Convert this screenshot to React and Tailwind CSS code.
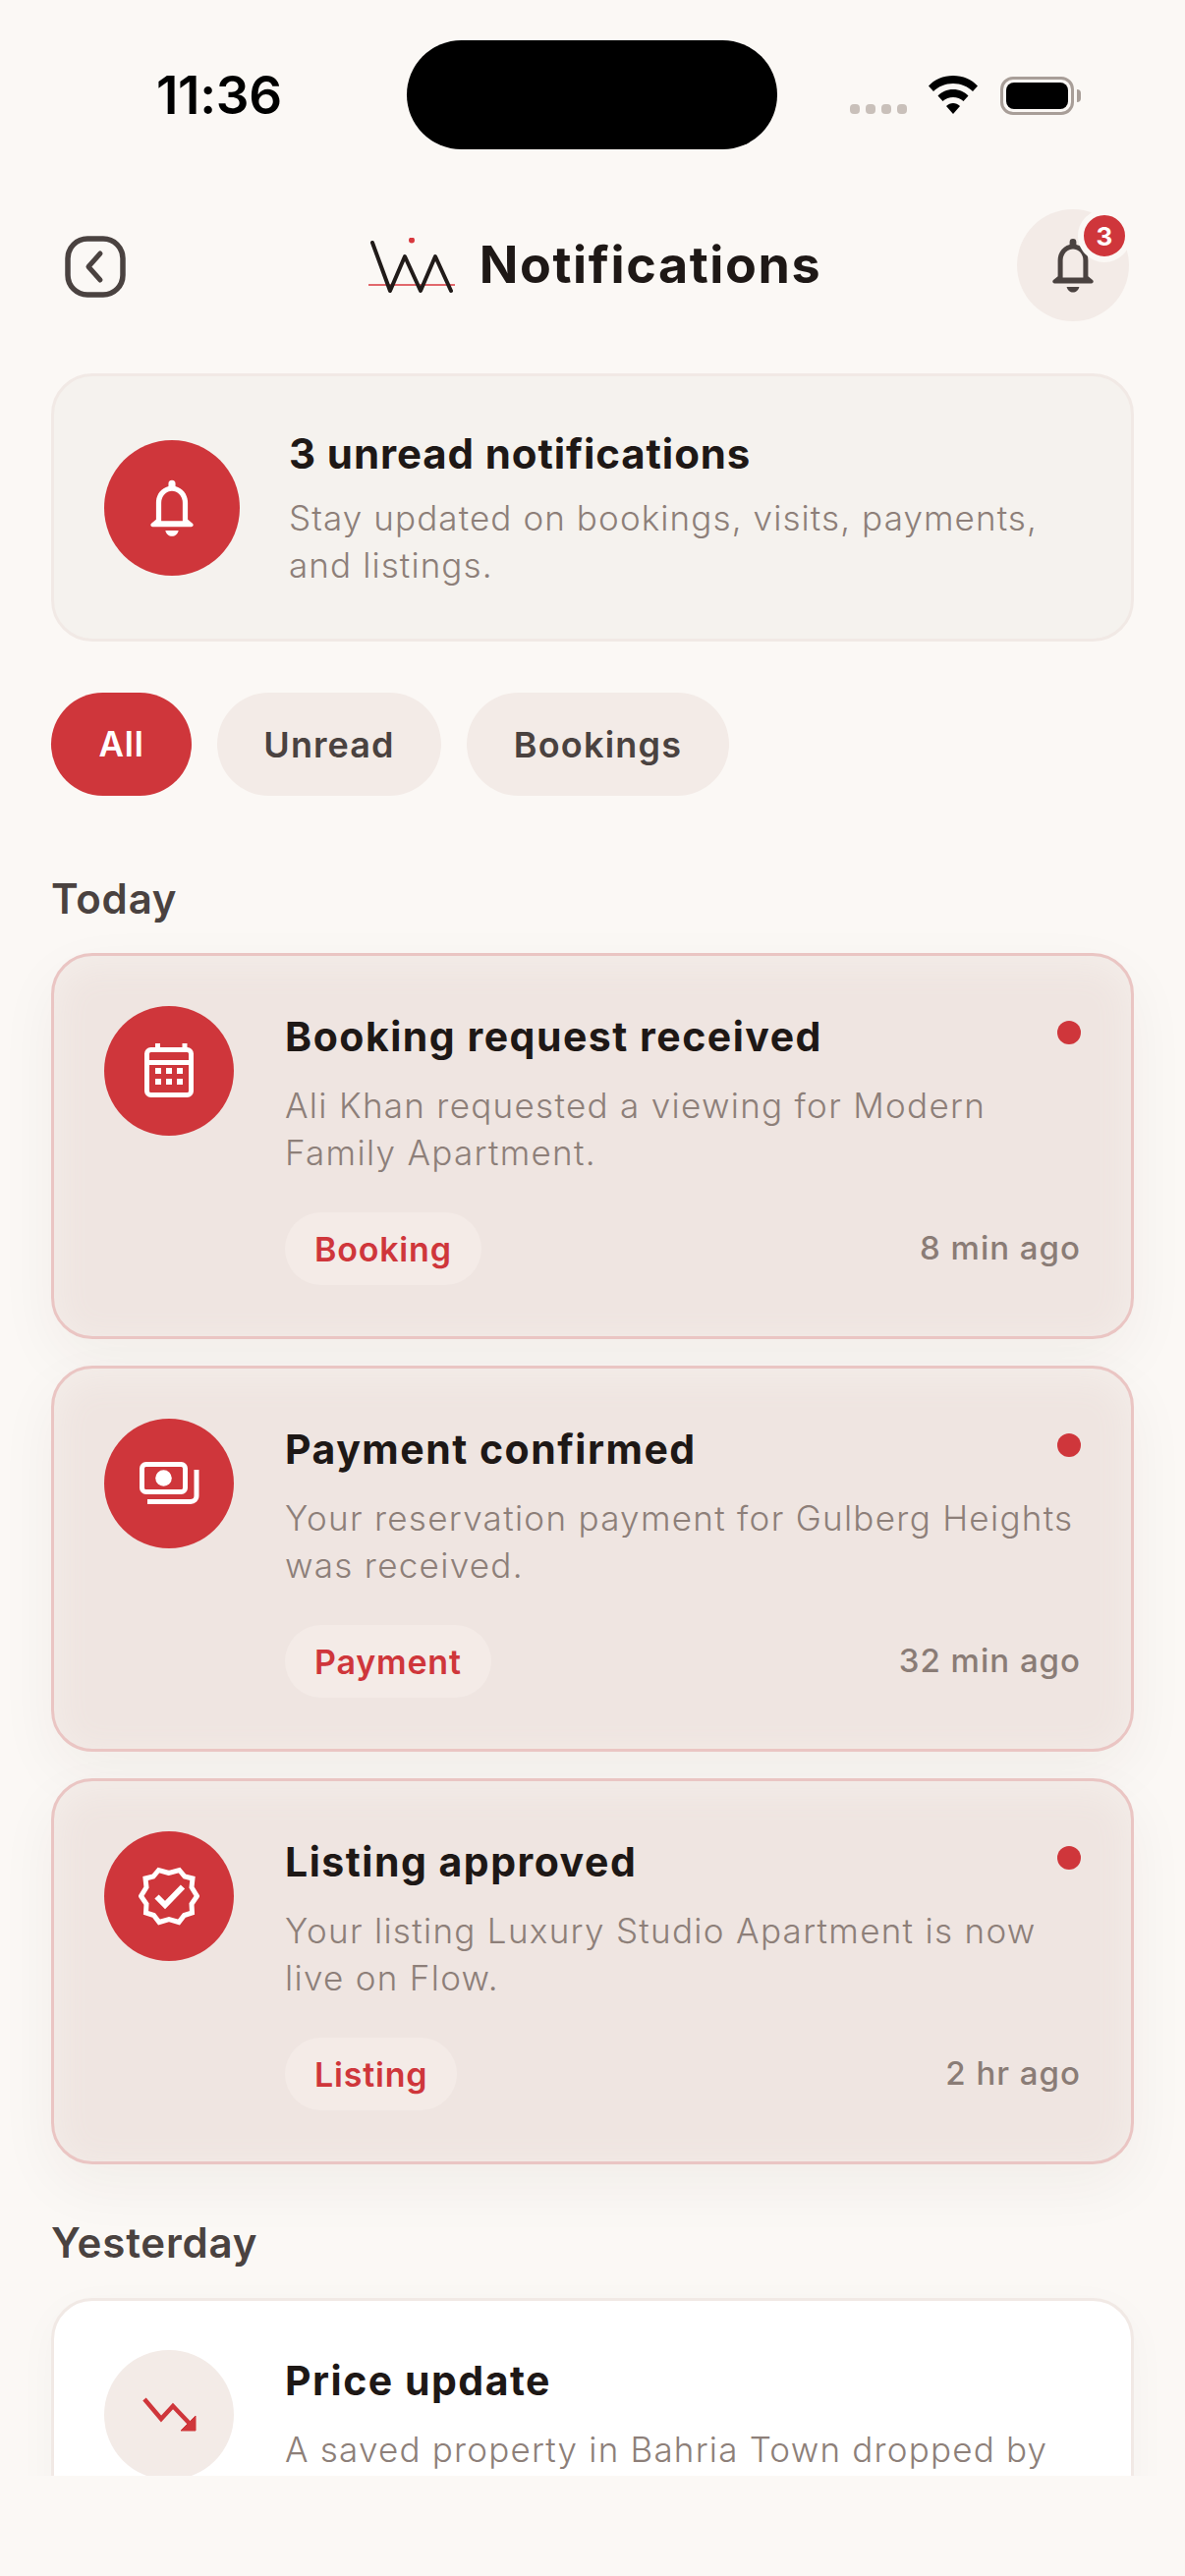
import React from "react";

const font = { fontFamily: "Inter, 'Open Sans', sans-serif" };

function CalendarIcon() {
  return (
    <svg width="60" height="66" viewBox="0 -3 60 66" fill="none">
      <rect x="7.5" y="8.5" width="45" height="46" rx="4" stroke="#fff" strokeWidth="5" />
      <path d="M5 21.5H55" stroke="#fff" strokeWidth="5" />
      <path d="M18.5 2V8M46 2V8" stroke="#fff" strokeWidth="5" />
      <g fill="#fff">
        <rect x="16" y="27" width="6" height="6" /><rect x="27" y="27" width="6" height="6" /><rect x="38" y="27" width="6" height="6" />
        <rect x="16" y="38" width="6" height="6" /><rect x="27" y="38" width="6" height="6" /><rect x="38" y="38" width="6" height="6" />
      </g>
    </svg>
  );
}
function MoneyIcon() {
  return (
    <svg width="66" height="48" viewBox="0 0 66 48" fill="none">
      <rect x="5.500" y="4.500" width="44" height="28" rx="4" stroke="#fff" strokeWidth="5" />
      <circle cx="27.500" cy="18.500" r="8.3" fill="#fff" />
      <path d="M11 42.5H55C58.5 42.5 61 40 61 36.5V10" stroke="#fff" strokeWidth="5" />
    </svg>
  );
}
function BadgeIcon() {
  return (
    <svg width="62" height="60" viewBox="0 0 62 60" fill="none">
      <path d="M31 6.5L20.5 3.5L15 10L7 12L8 21L2.5 30L8 38L7.5 47L15.5 49.5L21 56.5L31 53.5L41 56.5L46.5 49.5L54.5 47L54 38L59.5 30L54 21L55 12L47 10L41.5 3.5Z" stroke="#fff" strokeWidth="5" />
      <path d="M18.5 30.5L27 39L45 20.5" stroke="#fff" strokeWidth="6" />
    </svg>
  );
}
function TrendIcon() {
  return (
    <svg width="62" height="38" viewBox="0 0 62 38" fill="none">
      <path d="M6 3L23 23L35 10L54 30" stroke="#cf363b" strokeWidth="4.500" />
      <path d="M58 20V35H43Z" fill="#cf363b" stroke="#cf363b" strokeWidth="1" />
    </svg>
  );
}
function BellIcon({ color, width, height }) {
  return (
    <svg width={width} height={height} viewBox="0 0 44 56" fill="none">
      <path d="M22 1a3.4 3.4 0 0 1 3.4 3.4V7C33 9 37.4 15.5 37.4 23v16.2l4.6 3.8c1.4 1.2.7 3.4-1.2 3.4H3.2c-1.9 0-2.6-2.2-1.2-3.4l4.6-3.8V23C6.6 15.5 11 9 18.6 7V4.4A3.4 3.4 0 0 1 22 1Z" fill={color} />
      <path d="M11.6 40.6V23c0-6.4 4.6-11.6 10.4-11.6S32.4 16.6 32.4 23v17.6Z" fill="var(--bell-bg)" />
      <path d="M15.6 50h12.8c-.8 3.4-3.4 5.6-6.4 5.6S16.400 53.400 15.600 50Z" fill={color} />
    </svg>
  );
}

function Card({ icon, title, desc, tag, time }) {
  return (
    <div className="relative h-[393px] rounded-[42px] border-[3px] border-[#eac5c3] bg-[#efe5e1] pl-[51px] pr-[51px] pt-[51px] flex shadow-[inset_0_8px_36px_#f4eeea,0_22px_60px_rgba(60,30,20,0.05)]">
      <div className="w-[132px] h-[132px] rounded-full bg-[#cf363b] flex items-center justify-center shrink-0">{icon}</div>
      <div className="ml-[52px] flex-1 min-w-0">
        <div className="text-[41px] leading-[50px] font-[650] text-[#1e1816] tracking-[1.5px] mt-[6px]">{title}</div>
        <div className="mt-[21px] text-[35px] leading-[48px] font-light text-[#8d7f79] tracking-[1.3px] w-[810px]">{desc}</div>
        <div className="mt-[37px] flex items-center justify-between">
          <div className="h-[74px] px-[30px] rounded-full bg-[#f4ebe7] flex items-center text-[34px] font-semibold text-[#cf363b] tracking-[0.8px]">{tag}</div>
          <div className="text-[33px] font-medium text-[#8a7c76] tracking-[1px]">{time}</div>
        </div>
      </div>
      <div className="absolute right-[51px] top-[66px] w-[24px] h-[24px] rounded-full bg-[#cf363b]" />
    </div>
  );
}

export default function App() {
  return (
    <div className="w-[1206px] h-[2622px] bg-[#fbf8f5] overflow-hidden flex flex-col" style={font}>
      {/* status bar */}
      <div className="h-[213px] shrink-0 flex items-start pt-[41px]">
        <div className="w-[414px] h-[111px] flex items-center pl-[159px] pt-[3px] text-[53px] font-semibold text-black tracking-[-0.3px]">11:36</div>
        <div className="w-[377px] h-[111px] rounded-[56px] bg-black" />
        <div className="relative flex-1 h-[111px]">
          <div className="absolute left-[74px] top-[65px] flex gap-[6px]">
            <span className="w-[10px] h-[10px] rounded-[4px] bg-[#c9c0ba]" /><span className="w-[10px] h-[10px] rounded-[4px] bg-[#c9c0ba]" /><span className="w-[10px] h-[10px] rounded-[4px] bg-[#c9c0ba]" /><span className="w-[10px] h-[10px] rounded-[4px] bg-[#c9c0ba]" />
          </div>
          <svg className="absolute left-[153px] top-[36px]" width="52" height="40" viewBox="0 0 52 40">
            <path d="M26 0C36 0 45 4 51 10.500L46 16C41 11 34 8 26 8S11 11 6 16L1 10.500C7 4 16 0 26 0Z" fill="#000" />
            <path d="M26 14C32.500 14 37.500 16.500 41.500 20.500L36.500 26C33.500 23.300 30 22 26 22S18.500 23.300 15.500 26L10.500 20.500C14.500 16.500 19.500 14 26 14Z" fill="#000" />
            <path d="M26 28C28.500 28 31 29 33 31L26 39L19 31C21 29 23.500 28 26 28Z" fill="#000" />
          </svg>
          <div className="absolute left-[227px] top-[37px] w-[75px] h-[39px] rounded-[13px] border-[3px] border-[#a89e98] p-[3px]">
            <div className="w-full h-full rounded-[8px] bg-black" />
          </div>
          <div className="absolute left-[305px] top-[50px] w-[4px] h-[13px] rounded-r-[4px] bg-[#a89e98]" />
        </div>
      </div>
      {/* header */}
      <div className="h-[167px] shrink-0 relative flex items-start justify-between pl-[66px] pr-[57px]">
        <svg className="mt-[27px]" width="62" height="63" viewBox="0 0 62 63" fill="none">
          <rect x="3" y="3" width="56" height="57" rx="20" stroke="#4a4240" strokeWidth="5.500" />
          <path d="M36 18L24 31.500L36 45" stroke="#4a4240" strokeWidth="5" strokeLinecap="round" strokeLinejoin="round" />
        </svg>
        <div className="flex items-start mt-[29px] ml-[48px]">
          <svg width="90" height="60" viewBox="0 0 90 60" fill="none">
            <path d="M0 48H88" stroke="#d8383e" strokeWidth="1.500" />
            <path d="M4 5L22 54L37 19L53 54L68 19L84 54" stroke="#211b19" strokeWidth="4" strokeLinecap="round" strokeLinejoin="round" />
            <circle cx="44" cy="2.500" r="3" fill="#d8383e" />
          </svg>
          <div className="ml-[23px] -mt-[2px] text-[52px] leading-[60px] font-bold text-[#1e1816] tracking-[1.6px]">Notifications</div>
        </div>
        <div className="relative w-[114px] h-[114px] rounded-full bg-[#f3ebe7] flex items-center justify-center [--bell-bg:#f3ebe7]">
          <BellIcon color="#4a4240" width="44" height="56" />
          <div className="absolute -right-[2px] top-0 w-[54px] h-[54px] rounded-full bg-[#cf363b] border-[6px] border-[#fbf8f5] flex items-center justify-center text-white text-[26px] font-bold">3</div>
        </div>
      </div>
      {/* scroll */}
      <div className="h-[2140px] shrink-0 overflow-hidden px-[52px]">
        <div className="h-[273px] rounded-[42px] border-[3px] border-[#f1e9e5] bg-[#f5f2ee] flex items-start pl-[51px] pt-[65px]">
          <div className="w-[138px] h-[138px] rounded-full bg-[#cf363b] flex items-center justify-center shrink-0 [--bell-bg:#cf363b]">
            <BellIcon color="#fff" width="46" height="60" />
          </div>
          <div className="ml-[50px] -mt-[11px]">
            <div className="text-[42px] leading-[50px] font-[650] text-[#1e1816] tracking-[0.9px]">3 unread notifications</div>
            <div className="mt-[16px] text-[35px] leading-[48px] font-light text-[#8d7f79] tracking-[1.1px] w-[800px]">Stay updated on bookings, visits, payments, and listings.</div>
          </div>
        </div>
        <div className="mt-[52px] flex gap-[26px]">
          <div className="h-[105px] w-[143px] rounded-full bg-[#cf363b] flex items-center justify-center text-white text-[35px] font-semibold tracking-[0.8px]">All</div>
          <div className="h-[105px] w-[228px] rounded-full bg-[#f3ebe7] flex items-center justify-center text-[#4a4240] text-[36px] font-semibold tracking-[1.1px]">Unread</div>
          <div className="h-[105px] w-[267px] rounded-full bg-[#f3ebe7] flex items-center justify-center text-[#4a4240] text-[36px] font-semibold tracking-[1.2px]">Bookings</div>
        </div>
        <div className="mt-[80px] text-[42px] leading-[50px] font-semibold text-[#4a4240] tracking-[0.8px]">Today</div>
        <div className="mt-[30px] flex flex-col gap-[27px]">
          <Card icon={<CalendarIcon />} title="Booking request received" desc="Ali Khan requested a viewing for Modern Family Apartment." tag="Booking" time="8 min ago" />
          <Card icon={<MoneyIcon />} title="Payment confirmed" desc="Your reservation payment for Gulberg Heights was received." tag="Payment" time="32 min ago" />
          <Card icon={<BadgeIcon />} title="Listing approved" desc="Your listing Luxury Studio Apartment is now live on Flow." tag="Listing" time="2 hr ago" />
        </div>
        <div className="mt-[55px] text-[42px] leading-[50px] font-semibold text-[#4a4240] tracking-[0.8px]">Yesterday</div>
        <div className="mt-[31px] h-[393px] rounded-[42px] border-[3px] border-[#f1e9e5] bg-white pl-[51px] pr-[51px] pt-[50px] flex shadow-[0_10px_40px_rgba(60,30,20,0.03)]">
          <div className="w-[132px] h-[132px] rounded-full bg-[#f3ebe7] flex items-center justify-center shrink-0"><TrendIcon /></div>
          <div className="ml-[52px] flex-1 min-w-0">
            <div className="text-[41px] leading-[50px] font-[650] text-[#1e1816] tracking-[1.5px] mt-[6px]">Price update</div>
            <div className="mt-[21px] text-[35px] leading-[48px] font-light text-[#8d7f79] tracking-[1.2px] w-[810px]">A saved property in Bahria Town dropped by</div>
          </div>
        </div>
      </div>
    </div>
  );
}
